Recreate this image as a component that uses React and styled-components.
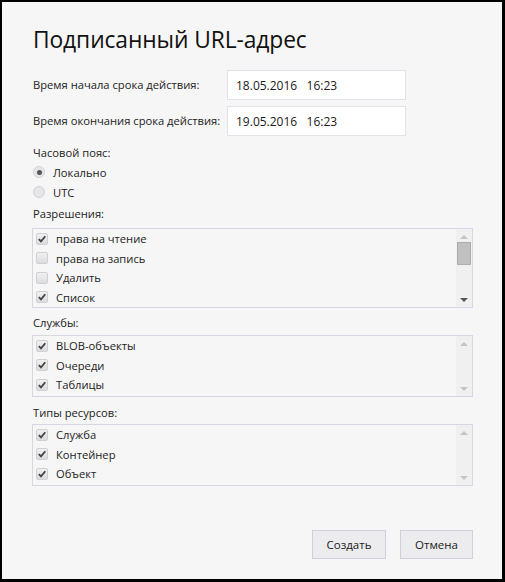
import React from "react";
import styled, { createGlobalStyle } from "styled-components";

const Global = createGlobalStyle`
  html, body { margin: 0; padding: 0; background: #000; }
  #root { width: 505px; height: 582px; }
  * { box-sizing: border-box; }
`;

const Frame = styled.div`
  width: 505px;
  height: 582px;
  border-style: solid;
  border-color: #000;
  border-width: 2px 3px 3px 2px;
  background: #f6f6f6;
  font-family: "Open Sans", "Noto Sans", sans-serif;
  color: #1e1e1e;
  display: flex;
  flex-direction: column;
  padding: 0 29px 0 30px;
`;

const Title = styled.h1`
  margin: 22px 0 0 1px;
  font-weight: 400;
  font-size: 22.8px;
  line-height: 32px;
  color: #111;
  letter-spacing: -0.1px;
`;

const TimeGrid = styled.div`
  margin-top: 14px;
  display: grid;
  grid-template-columns: 195px 179px;
  row-gap: 6px;
  align-items: center;
`;

const Label = styled.div`
  font-size: 11.2px;
  line-height: 16px;
  color: #222;
  padding-left: 1px;
`;

const Input = styled.div`
  height: 30px;
  border: 1px solid #e1e2ea;
  background: #fff;
  display: flex;
  align-items: center;
  padding-left: 8px;
  font-size: 12px;
  color: #1a1a1a;
  white-space: pre;
`;

const SectionLabel = styled(Label)`
  margin-top: ${(p) => p.$mt || 0}px;
`;

const RadioRow = styled.label`
  display: flex;
  align-items: center;
  gap: 8px;
  height: 20px;
  font-size: 11.2px;
  color: #222;
  padding-left: 1px;
`;

const RadioCircle = styled.span`
  width: 12px;
  height: 12px;
  border-radius: 50%;
  border: 1px solid #d2d2d6;
  background: #e6e6e8;
  display: flex;
  align-items: center;
  justify-content: center;
  &::after {
    content: "";
    width: 5px;
    height: 5px;
    border-radius: 50%;
    background: ${(p) => (p.$on ? "#555" : "transparent")};
  }
`;

const RadioGroup = styled.div`
  margin-top: 1px;
  display: flex;
  flex-direction: column;
`;

const ListBox = styled.div`
  margin-top: ${(p) => p.$mt}px;
  width: 441px;
  border: 1px solid #d6d7e2;
  display: flex;
  background: #f6f6f6;
`;

const Items = styled.div`
  flex: 1;
  padding: 0 0 ${(p) => p.$pb}px 3px;
  display: flex;
  flex-direction: column;
`;

const Item = styled.div`
  height: 19.5px;
  display: flex;
  align-items: center;
  gap: 8px;
  font-size: 11.2px;
  color: #222;
`;

const Box = styled.span`
  width: 12px;
  height: 12px;
  border: 1px solid #cfcfd4;
  border-radius: 2px;
  background: linear-gradient(#f0f0f0, #dcdcde);
  display: flex;
  align-items: center;
  justify-content: center;
`;

const Scroll = styled.div`
  width: 16px;
  background: #f0f0f0;
  display: flex;
  flex-direction: column;
  align-items: center;
  padding: 6px 0 5px;
`;

const Arrow = styled.span`
  width: 0;
  height: 0;
  border-left: 4px solid transparent;
  border-right: 4px solid transparent;
  ${(p) =>
    p.$down
      ? `border-top: 4px solid ${p.$on ? "#555" : "#c4c4c4"};`
      : `border-bottom: 4px solid ${p.$on ? "#555" : "#c4c4c4"};`}
`;

const Thumb = styled.span`
  margin-top: 3px;
  width: 14px;
  height: 23px;
  background: #c1c1c1;
  border: 1px solid #adadad;
`;

const Spacer = styled.div`
  flex: 1;
`;

const Footer = styled.div`
  display: flex;
  justify-content: flex-end;
  gap: 14px;
  margin-bottom: 20px;
`;

const Button = styled.button`
  width: ${(p) => p.$w}px;
  height: 29px;
  border: 1px solid #cfd0dc;
  background: #ececef;
  font-family: inherit;
  font-size: 11.5px;
  color: #1a1a1a;
  padding: 0;
`;

const Check = () => (
  <svg width="10" height="10" viewBox="0 0 10 10">
    <path d="M1.8 5.2 L4 7.4 L8.3 2.2" fill="none" stroke="#444" strokeWidth="1.8" />
  </svg>
);

const List = ({ items, scrollable, mt = 4, pb = 0 }) => (
  <ListBox $mt={mt}>
    <Items $pb={pb}>
      {items.map(([t, on]) => (
        <Item key={t}>
          <Box>{on && <Check />}</Box>
          {t}
        </Item>
      ))}
    </Items>
    <Scroll>
      <Arrow />
      {scrollable && <Thumb />}
      <Spacer />
      <Arrow $down $on={scrollable} />
    </Scroll>
  </ListBox>
);

export default function App() {
  return (
    <>
      <Global />
      <Frame>
        <Title>Подписанный URL-адрес</Title>
        <TimeGrid>
          <Label>Время начала срока действия:</Label>
          <Input>{"18.05.2016   16:23"}</Input>
          <Label>Время окончания срока действия:</Label>
          <Input>{"19.05.2016   16:23"}</Input>
        </TimeGrid>
        <SectionLabel $mt={9}>Часовой пояс:</SectionLabel>
        <RadioGroup>
          <RadioRow>
            <RadioCircle $on />
            Локально
          </RadioRow>
          <RadioRow>
            <RadioCircle />
            UTC
          </RadioRow>
        </RadioGroup>
        <SectionLabel $mt={4}>Разрешения:</SectionLabel>
        <List
          scrollable
          mt={6}
          items={[
            ["права на чтение", true],
            ["права на запись", false],
            ["Удалить", false],
            ["Список", true],
          ]}
        />
        <SectionLabel $mt={7}>Службы:</SectionLabel>
        <List
          mt={4}
          pb={1.5}
          items={[
            ["BLOB-объекты", true],
            ["Очереди", true],
            ["Таблицы", true],
          ]}
        />
        <SectionLabel $mt={8}>Типы ресурсов:</SectionLabel>
        <List
          mt={3}
          pb={1.5}
          items={[
            ["Служба", true],
            ["Контейнер", true],
            ["Объект", true],
          ]}
        />
        <Spacer />
        <Footer>
          <Button $w={74}>Создать</Button>
          <Button $w={73}>Отмена</Button>
        </Footer>
      </Frame>
    </>
  );
}
